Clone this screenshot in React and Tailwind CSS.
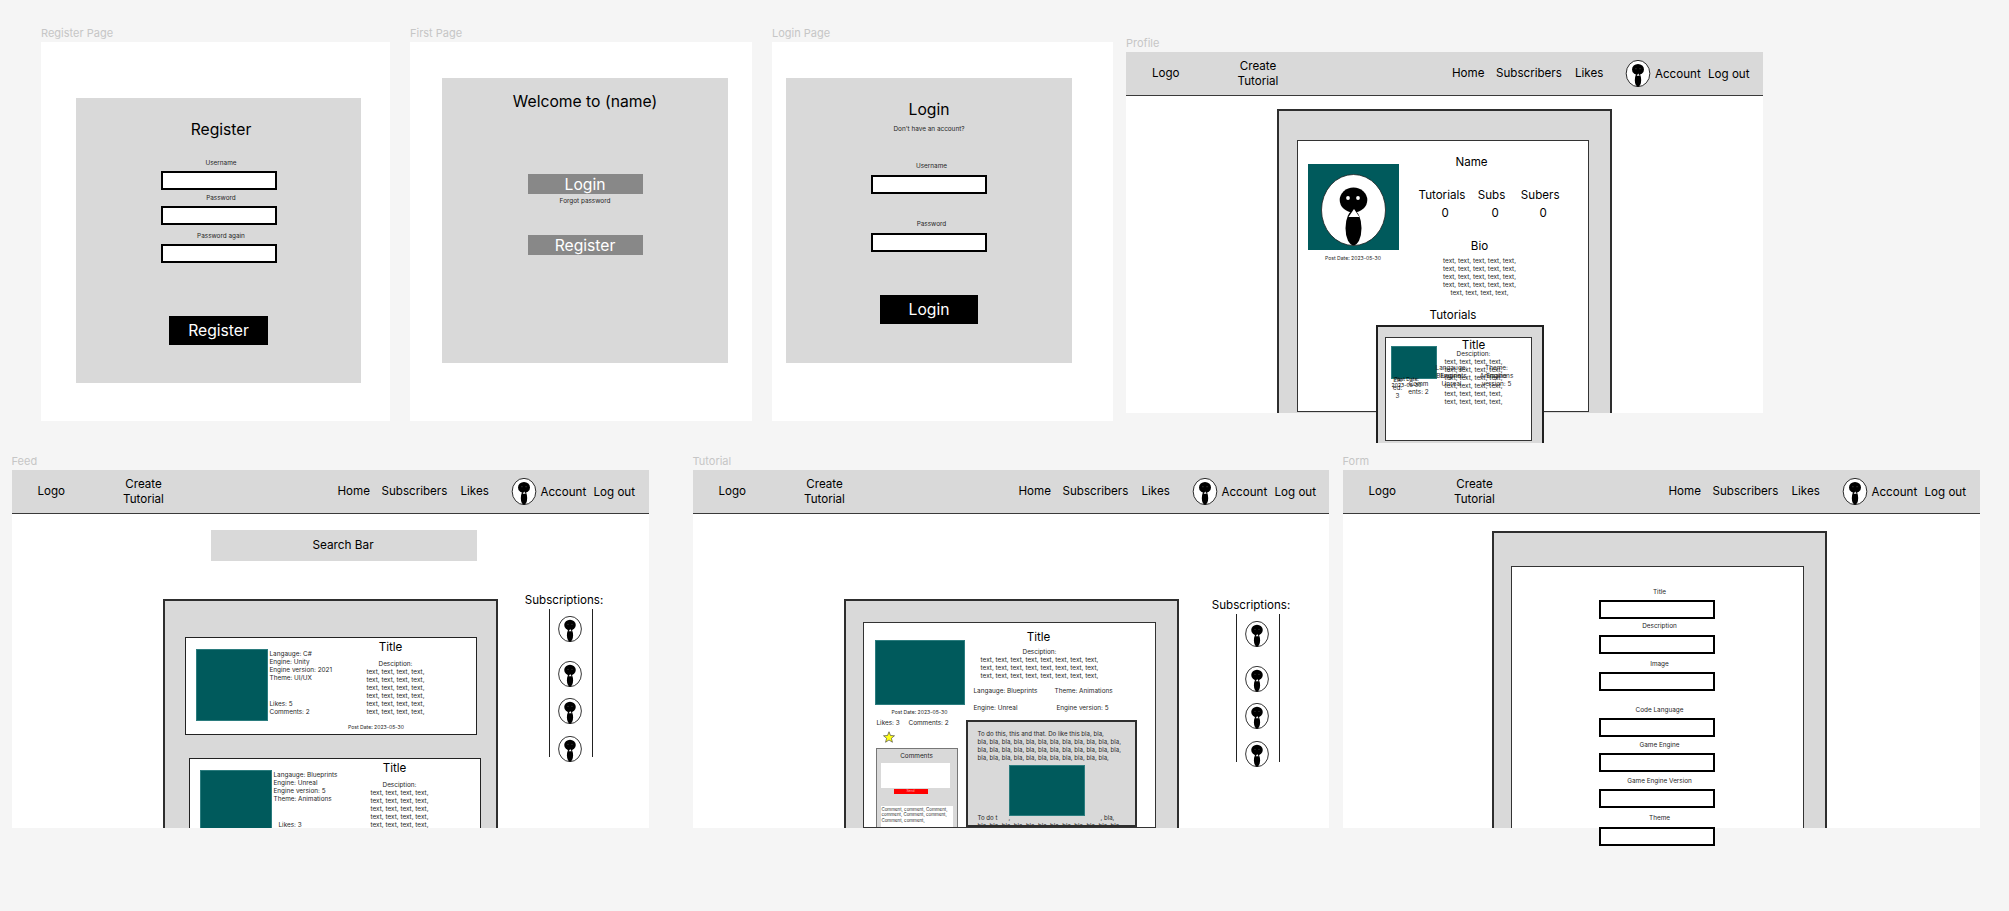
import React from "react";

const big = "text-[15.7px] leading-[19px]";
const mid = "text-[11.6px] leading-[15px]";
const small = "text-[6.4px] leading-[8px] text-[#262626]";
const C = "absolute -translate-x-1/2 -translate-y-1/2 whitespace-nowrap text-center";
const inputBox = "block box-border w-[116px] h-[19px] bg-white border-2 border-black";
const panelBox = "box-border bg-[#d9d9d9] border-x-2 border-t-2 border-[#2e2e2e] overflow-hidden";
const teal = "bg-[#005a5c] border border-[#2b7c7e] box-border";

// little figure used as the profile picture placeholder
const Avatar = ({ className }) => (
    <svg viewBox="0 0 65 72" className={className}>
        <ellipse cx="32.5" cy="36" rx="31.5" ry="35" fill="#fff" stroke="#000" strokeWidth="2.2" />
        <ellipse cx="32.5" cy="25" rx="16" ry="14.5" fill="#000" />
        <ellipse cx="32.5" cy="53" rx="8.5" ry="18.5" fill="#000" />
        <path d="M33 36 L37 42 L29 42 Z" fill="#fff" />
        <circle cx="27" cy="23" r="1.6" fill="#444" />
        <circle cx="38" cy="23" r="1.6" fill="#444" />
    </svg>
);

const AvatarLarge = ({ className }) => (
    <svg viewBox="0 0 65 72" className={className}>
        <ellipse cx="32.5" cy="36" rx="32" ry="35.5" fill="#fff" stroke="#222" strokeWidth="0.8" />
        <ellipse cx="32.5" cy="26" rx="13.8" ry="12.5" fill="#000" />
        <ellipse cx="32.5" cy="54" rx="8" ry="17.5" fill="#000" />
        <path d="M33 35 L38.5 43 L27.5 43 Z" fill="#fff" />
        <circle cx="27" cy="24" r="1.9" fill="#fff" />
        <circle cx="37" cy="24" r="1.9" fill="#fff" />
    </svg>
);

const Nav = () => (
    <div className={`${mid} flex items-center h-[44px] box-border bg-[#d9d9d9] border-b-[1.5px] border-[#3a3a3a] text-black`}>
        <span className="ml-[26px] w-[76px] -mt-[1px]">Logo</span>
        <span className="w-[60px] text-center mt-[1px]">Create Tutorial</span>
        <span className="ml-[164px] w-[44px] -mt-[1px]">Home</span>
        <span className="w-[79px] -mt-[1px]">Subscribers</span>
        <span className="w-[50px] -mt-[1px]">Likes</span>
        <Avatar className="w-[26px] h-[27px] -mt-[1px]" />
        <span className="ml-[4px] w-[53px] mt-[1px]">Account</span>
        <span className="mt-[1px]">Log out</span>
    </div>
);

const Field = ({ label, labelClass = "mt-[4px]", inputClass = "mt-[4px]", shift = "pl-[5px]" }) => (
    <>
        <div className={`${small} ${labelClass} ${shift}`}>{label}</div>
        <div className={`${inputBox} ${inputClass}`}></div>
    </>
);

const Subscriptions = ({ className }) => (
    <div className={`absolute w-[80px] ${className}`}>
        <div className={`${mid} mt-[1px] text-center h-[16px] whitespace-nowrap`}>Subscriptions:</div>
        <div className="ml-[25px] box-border w-[43.5px] h-[148px] border-x-[1.5px] border-[#222] pl-[6.5px] pt-[7px]">
            <Avatar className="w-[26px] h-[26px]" />
            <Avatar className="w-[26px] h-[26px] mt-[19px]" />
            <Avatar className="w-[26px] h-[26px] mt-[11px]" />
            <Avatar className="w-[26px] h-[26px] mt-[12px]" />
        </div>
    </div>
);

const Frame = ({ name, className, labelTop = "top-[-15px]", children }) => (
    <div className={`absolute bg-white ${className}`}>
        <div className={`absolute left-0 ${labelTop} text-[11px] leading-[13px] text-[#c6c6c6] whitespace-nowrap`}>{name}</div>
        {children}
    </div>
);

const lines = (n, txt) => Array.from({ length: n }, (_, i) => <div key={i}>{txt}</div>);
const t4 = "text, text, text, text,";

const FeedCard = ({ className, info, likesClass = "mt-[18px]", titleClass = "pr-[10px]" }) => (
    <div className={`relative flex box-border w-[292px] h-[98px] shrink-0 bg-white border-[1.5px] border-[#222] ${className}`}>
        <div className={`${teal} ml-[9.5px] mt-[10.5px] w-[72px] h-[72px] shrink-0`}></div>
        <div className={`${small} ml-[2px] mt-[11.5px] w-[85px] shrink-0 whitespace-nowrap`}>
            {info.map((l) => <div key={l.text}>{l.text}</div>)}
            <div className={likesClass}>Likes: {info.likes}</div>
            <div>Comments: 2</div>
        </div>
        <div className="w-[82px] shrink-0 text-center whitespace-nowrap">
            <div className={`${mid} mt-[2px] ${titleClass}`}>Title</div>
            <div className={`${small} mt-[4.5px]`}>Desciption:</div>
            <div className={small}>{lines(6, t4)}</div>
        </div>
        <div className={`${C} left-[190px] top-[89px] text-[5.1px] leading-[6px] text-[#262626]`}>Post Date: 2023-05-30</div>
    </div>
);

const card1 = [{ text: "Langauge: C#" }, { text: "Engine: Unity" }, { text: "Engine version: 2021" }, { text: "Theme: UI/UX" }];
card1.likes = 5;
const card2 = [{ text: "Langauge: Blueprints" }, { text: "Engine: Unreal" }, { text: "Engine version: 5" }, { text: "Theme: Animations" }];
card2.likes = 3;

const bla12 = "bla, bla, bla, bla, bla, bla, bla, bla, bla, bla, bla, bla,";

export default function App() {
    return (
        <div className="relative w-[2009px] h-[911px] overflow-hidden bg-[#f5f5f5] text-black font-['Inter',sans-serif]">
            {/* Register */}
            <Frame name="Register Page" className="left-[41px] top-[42px] w-[349px] h-[379px]">
                <div className="absolute left-[35px] top-[56px] w-[285px] h-[285px] bg-[#d9d9d9] flex flex-col items-center">
                    <div className={`${big} mt-[22px] pl-[5px]`}>Register</div>
                    <Field label="Username" labelClass="mt-[20px]" />
                    <Field label="Password" />
                    <Field label="Password again" labelClass="mt-[7px]" />
                    <div className={`${big} mt-[53px] w-[99px] h-[29px] flex items-center justify-center bg-black text-white`}>Register</div>
                </div>
            </Frame>

            {/* First page */}
            <Frame name="First Page" className="left-[410px] top-[42px] w-[342px] h-[379px]">
                <div className="absolute left-[32px] top-[36px] w-[286px] h-[285px] bg-[#d9d9d9] flex flex-col items-center">
                    <div className={`${big} mt-[13.5px]`}>Welcome to (name)</div>
                    <div className={`${big} mt-[63px] w-[115px] h-[20px] pt-[1px] flex items-center justify-center bg-[#888888] text-white`}>Login</div>
                    <div className={`${small} mt-[3px]`}>Forgot password</div>
                    <div className={`${big} mt-[30px] w-[115px] h-[20px] pt-[1px] flex items-center justify-center bg-[#888888] text-white`}>Register</div>
                </div>
            </Frame>

            {/* Login */}
            <Frame name="Login Page" className="left-[772px] top-[42px] w-[341px] h-[379px]">
                <div className="absolute left-[14px] top-[36px] w-[286px] h-[285px] bg-[#d9d9d9] flex flex-col items-center">
                    <div className={`${big} mt-[21.5px]`}>Login</div>
                    <div className={`${small} mt-[6px]`}>Don't have an account?</div>
                    <Field label="Username" labelClass="mt-[29px]" inputClass="mt-[5px]" />
                    <Field label="Password" labelClass="mt-[26px]" inputClass="mt-[5px]" />
                    <div className={`${big} mt-[43px] w-[98px] h-[29px] flex items-center justify-center bg-black text-white`}>Login</div>
                </div>
            </Frame>

            {/* Profile */}
            <Frame name="Profile" className="left-[1126px] top-[52px] w-[637px] h-[361px]">
                <Nav />
                <div className={`${panelBox} absolute left-[151px] top-[57px] w-[335px] h-[304px] pl-[17.5px] pt-[29px]`}>
                    <div className="flex box-border w-[292.5px] h-[272px] bg-white border-[1.5px] border-[#333] overflow-hidden">
                        <div className="ml-[10px] shrink-0">
                            <div className="mt-[22.5px] w-[91px] h-[86px] pt-[6px] bg-[#005a5c] flex items-center justify-center">
                                <AvatarLarge className="w-[65px] h-[72px]" />
                            </div>
                            <div className="mt-[5px] text-center text-[5.1px] leading-[6px] text-[#262626]">Post Date: 2023-05-30</div>
                        </div>
                        <div className="ml-[1px] w-[160px] shrink-0 whitespace-nowrap">
                            <div className={`${mid} mt-[14px] pr-[16px] text-center`}>Name</div>
                            <div className={`${mid} mt-[17.5px] ml-[19px] flex`}>
                                <span className="w-[62px]">Tutorials</span>
                                <span className="w-[45px]">Subs</span>
                                <span>Subers</span>
                            </div>
                            <div className={`${mid} mt-[3px] ml-[42px] flex`}>
                                <span className="w-[50px]">0</span>
                                <span className="w-[48px]">0</span>
                                <span>0</span>
                            </div>
                            <div className={`${mid} mt-[18px] text-center`}>Bio</div>
                            <div className={`${small} mt-[3.5px] text-center`}>
                                {lines(4, "text, text, text, text, text,")}
                                <div>{t4}</div>
                            </div>
                            <div className={`${mid} mt-[11px] pr-[53px] text-center`}>Tutorials</div>
                        </div>
                    </div>
                </div>
                {/* nested card that hangs over the frame's bottom edge */}
                <div className="absolute left-[249.5px] top-[273px] w-[168.5px] h-[118px] box-border bg-[#d9d9d9] border-x-2 border-t-2 border-[#1f1f1f] overflow-hidden">
                    <div className="absolute left-[7.5px] top-[10px] w-[147px] h-[104px] box-border bg-white border-[1.5px] border-[#333]">
                        <div className={`${teal} absolute left-[4.5px] top-[7.5px] w-[46px] h-[33px]`}></div>
                        <div className={`${C} ${mid} left-[87.5px] top-[6.5px]`}>Title</div>
                        <div className={`${C} ${small} left-[87.5px] top-[15.5px]`}>Desciption:</div>
                        <div className={`${C} ${small} left-[87.5px] top-[43.5px]`}>{lines(6, t4)}</div>
                        <div className={`${C} ${small} left-[65.5px] top-[33.5px]`}>Langauge:<br />Blueprints</div>
                        <div className={`${C} ${small} left-[65.5px] top-[41.5px]`}>Engine:<br />Unreal</div>
                        <div className={`${C} ${small} left-[110.5px] top-[33.5px]`}>Theme:<br />Animations</div>
                        <div className={`${C} ${small} left-[110.5px] top-[41.5px]`}>Engine<br />version: 5</div>
                        <div className={`${C} ${small} left-[11.5px] top-[50px]`}>Lik<br />ed:<br />3</div>
                        <div className={`${C} ${small} left-[32.5px] top-[50px]`}>Comm<br />ents: 2</div>
                        <div className={`${C} text-[5.1px] leading-[6px] left-[20.5px] top-[43.5px]`}>Post Date:<br />2023-05-30</div>
                    </div>
                </div>
            </Frame>

            {/* Feed */}
            <Frame name="Feed" className="left-[11.5px] top-[470px] w-[637px] h-[358px]">
                <Nav />
                <div className="mt-[16px] ml-[199.5px] w-[266px] h-[31px] pt-[1px] pr-[2px] bg-[#d9d9d9] flex items-center justify-center text-[11.8px]">Search Bar</div>
                <div className={`${panelBox} absolute left-[151.5px] top-[129px] w-[335px] h-[229px] pt-[36px]`}>
                    <FeedCard className="ml-[20px]" info={card1} />
                    <FeedCard className="ml-[24px] mt-[23px]" info={card2} likesClass="mt-[18px] ml-[5px]" />
                </div>
                <Subscriptions className="left-[512.5px] top-[122px]" />
            </Frame>

            {/* Tutorial */}
            <Frame name="Tutorial" className="left-[692.5px] top-[470px] w-[636px] h-[358px]">
                <Nav />
                <div className={`${panelBox} absolute left-[151.5px] top-[129px] w-[335px] h-[229px] pl-[17px] pt-[21px]`}>
                    <div className="flex box-border w-[293px] h-[206px] bg-white border-[1.5px] border-[#333] overflow-hidden">
                        <div className="ml-[10.5px] w-[90px] shrink-0 whitespace-nowrap">
                            <div className={`${teal} mt-[16.5px] w-[90px] h-[65px]`}></div>
                            <div className="mt-[4px] text-center text-[5.1px] leading-[6px] text-[#262626]">Post Date: 2023-05-30</div>
                            <div className={`${small} mt-[4px] ml-[2px] flex`}>
                                <span className="w-[32px]">Likes: 3</span>
                                <span>Comments: 2</span>
                            </div>
                            <svg viewBox="0 0 24 24" className="mt-[4px] ml-[8px] w-[12px] h-[12px]">
                                <path d="M12 1.5 L15 9 L23 9.5 L16.8 14.6 L18.9 22.5 L12 18 L5.1 22.5 L7.2 14.6 L1 9.5 L9 9 Z" fill="#ffff1a" stroke="#333" strokeWidth="1.2" />
                            </svg>
                            <div className="mt-[5px] ml-[1px] box-border w-[82px] h-[90px] bg-[#d9d9d9] border-x border-t border-[#777]">
                                <div className={`${small} mt-[3px] text-center`}>Comments</div>
                                <div className="mt-[3px] ml-[4px] w-[69px] h-[25px] bg-white"></div>
                                <div className="mt-[1px] ml-[17px] w-[34px] h-[5px] bg-[#ff0000] text-center text-[#ffb0b0] text-[3.4px] leading-[5px]">Send</div>
                                <div className="mt-[12px] ml-[4px] w-[72px] h-[30px] bg-white pl-[1px] pt-[1px] text-[4.4px] leading-[5.6px] text-[#262626]">
                                    <div>Comment, comment, Comment,</div>
                                    <div>comment, Comment, comment,</div>
                                    <div>Comment, comment,</div>
                                </div>
                            </div>
                        </div>
                        <div className="w-[172px] shrink-0 whitespace-nowrap">
                            <div className={`${mid} mt-[7px] w-[148px] text-center`}>Title</div>
                            <div className={`${small} mt-[2.5px] w-[150px] text-center`}>
                                <div>Desciption:</div>
                                {lines(3, "text, text, text, text, text, text, text, text,")}
                            </div>
                            <div className={`${small} mt-[7px] ml-[9px] flex`}>
                                <span className="w-[81px]">Langauge: Blueprints</span>
                                <span>Theme: Animations</span>
                            </div>
                            <div className={`${small} mt-[9.5px] ml-[9px] flex`}>
                                <span className="w-[83px]">Engine: Unreal</span>
                                <span>Engine version: 5</span>
                            </div>
                            <div className="mt-[8px] ml-[1px] box-border w-[171px] h-[107px] bg-[#d9d9d9] border-2 border-[#2e2e2e] pl-[10px] pt-[7.5px] overflow-hidden text-[6.1px] leading-[8px] text-[#262626]">
                                <div>
                                    <div>To do this, this and that. Do like this bla, bla,</div>
                                    {lines(2, bla12)}
                                    <div>bla, bla, bla, bla, bla, bla, bla, bla, bla, bla, bla,</div>
                                </div>
                                <div className={`${teal} relative mt-[3.5px] ml-[31px] w-[76px] h-[51px]`}></div>
                                <div className="-mt-[2px] flex">
                                    <span className="w-[31px]">To do t</span>
                                    <span className="w-[92px]">,</span>
                                    <span>, bla,</span>
                                </div>
                                <div>{bla12}</div>
                            </div>
                        </div>
                    </div>
                </div>
                <Subscriptions className="left-[518.5px] top-[127px]" />
            </Frame>

            {/* Form */}
            <Frame name="Form" className="left-[1342.5px] top-[470px] w-[637px] h-[358px]">
                <Nav />
                <div className={`${panelBox} absolute left-[149.5px] top-[61px] w-[334.5px] h-[297px] pl-[17px] pt-[33px]`}>
                    <div className="box-border w-[292.5px] h-[280px] bg-white border-x-[1.5px] border-t-[1.5px] border-[#333]"></div>
                </div>
                {/* last field runs past the frame, so the column sits outside the clipped panel */}
                <div className="absolute left-[256.5px] top-[118px] w-[116px] flex flex-col items-center">
                    <Field label="Title" labelClass="mt-0" />
                    <Field label="Description" labelClass="mt-[3px]" inputClass="mt-[5px]" />
                    <Field label="Image" labelClass="mt-[6px]" inputClass="mt-[4px]" />
                    <Field label="Code Language" labelClass="mt-[15px]" />
                    <Field label="Game Engine" labelClass="mt-[4px]" inputClass="mt-[4px]" />
                    <Field label="Game Engine Version" labelClass="mt-[5px]" inputClass="mt-[4px]" />
                    <Field label="Theme" labelClass="mt-[6px]" inputClass="mt-[5px]" />
                </div>
            </Frame>
        </div>
    );
}
